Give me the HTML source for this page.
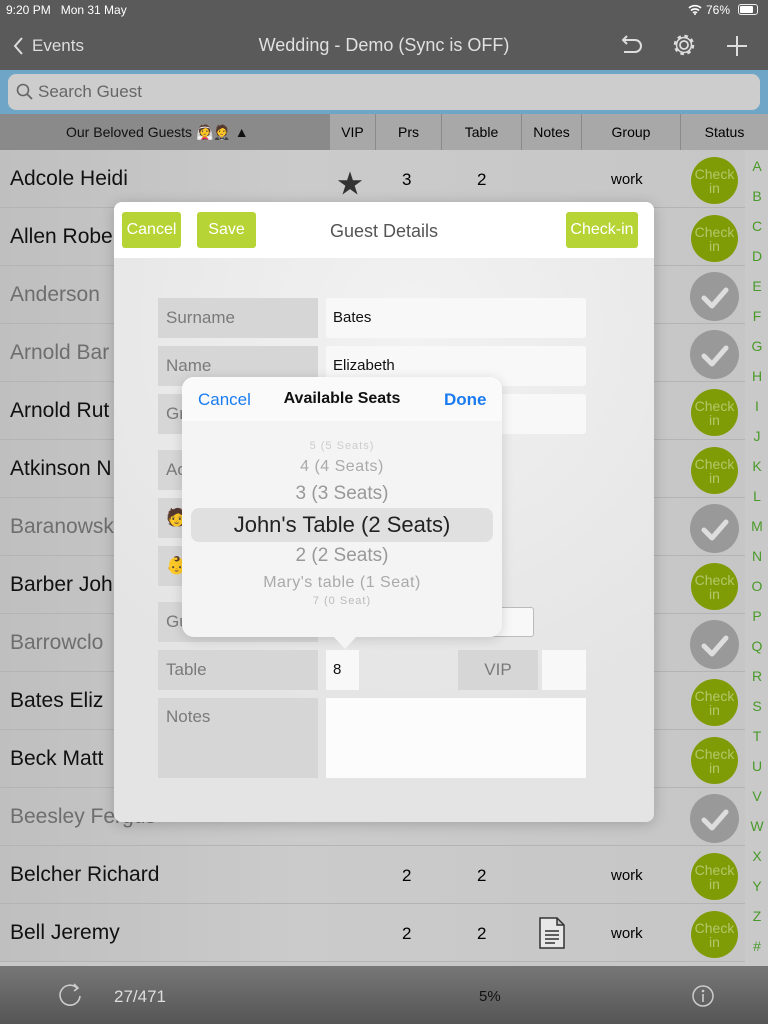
<!DOCTYPE html>
<html><head><meta charset="utf-8"><style>
*{margin:0;padding:0;box-sizing:border-box}
body{width:768px;height:1024px;position:relative;overflow:hidden;font-family:"Liberation Sans","Noto Sans CJK JP",sans-serif;background:#c8c8c8}
.a{position:absolute}
.row{position:absolute;left:0;width:745px;height:58px;border-bottom:1px solid #b4b4b4;background:linear-gradient(90deg,#bfbfbf,#cbcbcb 40%,#c6c6c6)}
.nm{position:absolute;left:10px;top:17px;font-size:21px;color:#111}
.g .nm{color:#6e6e6e}
.ci{position:absolute;left:691px;width:47px;height:47px;border-radius:50%;background:#7f9b05;color:#b4c86a;font-size:14px;text-align:center;line-height:14px;padding-top:10px}
.ck{position:absolute;left:690px;width:49px;height:49px;border-radius:50%;background:#999}
.lt{position:absolute;left:750px;width:14px;text-align:center;font-size:14px;color:#4a9a2a}
.lab{position:absolute;left:158px;width:160px;background:#d6d6d6;color:#7a7a7a;font-size:17px;padding-left:8px}
.fld{position:absolute;background:#f8f8f8;border-radius:3px;font-size:15px;color:#111;padding-left:7px}
.gb{position:absolute;top:212px;height:36px;background:#b6d435;color:#fff;border-radius:3px;font-size:16px;text-align:center;line-height:36px}
.pk{position:absolute;left:0;width:320px;text-align:center}
</style></head><body>
<!-- top bars -->
<div class="a" style="left:0;top:0;width:768px;height:70px;background:#5a5a5a"></div>
<div class="a" style="left:6px;top:3px;font-size:12px;color:#fff">9:20 PM&nbsp;&nbsp; Mon 31 May</div>
<div class="a" style="left:706px;top:3px;font-size:12px;color:#fff">76%</div>
<div class="a" style="left:738px;top:4px;width:20px;height:11px;border:1px solid #eee;border-radius:3px"><div style="width:13px;height:7px;margin:1px;background:#fff;border-radius:1px"></div></div>
<svg class="a" style="left:688px;top:4px" width="14" height="11" viewBox="0 0 14 11"><path d="M1 4a9 9 0 0 1 12 0M3 6.5a6 6 0 0 1 8 0M5 8.8a3 3 0 0 1 4 0" stroke="#fff" stroke-width="1.6" fill="none"/><circle cx="7" cy="10" r="1" fill="#fff"/></svg>
<svg class="a" style="left:12px;top:36px" width="12" height="20"><path d="M10 2L3 10l7 8" stroke="#ddd" stroke-width="2" fill="none"/></svg>
<div class="a" style="left:32px;top:36px;font-size:17px;color:#ddd">Events</div>
<div class="a" style="left:0;width:768px;top:35px;text-align:center;font-size:18px;color:#e0e0e0">Wedding - Demo (Sync is OFF)</div>
<svg class="a" style="left:618px;top:33px" width="26" height="24"><path d="M5 7h12a6 6 0 0 1 0 12H6M9 3L5 7l4 4" stroke="#ddd" stroke-width="2" fill="none"/></svg>
<svg class="a" style="left:671px;top:32px" width="26" height="26" viewBox="0 0 26 26"><circle cx="13" cy="13" r="4" stroke="#ddd" stroke-width="1.8" fill="none"/><circle cx="13" cy="13" r="8.5" stroke="#ddd" stroke-width="3.5" stroke-dasharray="3.3 3.4" fill="none"/><circle cx="13" cy="13" r="7.5" stroke="#ddd" stroke-width="1.5" fill="none"/></svg>
<svg class="a" style="left:726px;top:35px" width="22" height="22"><path d="M11 1v20M1 11h20" stroke="#ddd" stroke-width="2"/></svg>
<div class="a" style="left:0;top:70px;width:768px;height:44px;background:#6fa6c8"></div>
<div class="a" style="left:8px;top:74px;width:752px;height:36px;background:#cdcdcd;border-radius:8px"></div>
<svg class="a" style="left:16px;top:83px" width="18" height="18"><circle cx="7" cy="7" r="5.5" stroke="#666" stroke-width="1.6" fill="none"/><path d="M11 11l5 5" stroke="#666" stroke-width="1.8"/></svg>
<div class="a" style="left:38px;top:82px;font-size:17px;color:#666">Search Guest</div>
<div class="a" style="left:0;top:114px;width:768px;height:36px;background:#a8a8a8"></div>
<div class="a" style="left:0;top:114px;width:329px;height:36px;background:#8a8a8a"></div>
<div class="a" style="left:66px;top:124px;font-size:14px;color:#111">Our Beloved Guests 👰🤵 ▲</div>
<div class="a" style="top:114px;left:329px;width:46px;height:36px;border-left:1px solid #8a8a8a;text-align:center;line-height:36px;font-size:14px">VIP</div>
<div class="a" style="top:114px;left:375px;width:66px;height:36px;border-left:1px solid #8a8a8a;text-align:center;line-height:36px;font-size:14px">Prs</div>
<div class="a" style="top:114px;left:441px;width:80px;height:36px;border-left:1px solid #8a8a8a;text-align:center;line-height:36px;font-size:14px">Table</div>
<div class="a" style="top:114px;left:521px;width:60px;height:36px;border-left:1px solid #8a8a8a;text-align:center;line-height:36px;font-size:14px">Notes</div>
<div class="a" style="top:114px;left:581px;width:99px;height:36px;border-left:1px solid #8a8a8a;text-align:center;line-height:36px;font-size:14px">Group</div>
<div class="a" style="top:114px;left:680px;width:88px;height:36px;border-left:1px solid #8a8a8a;text-align:center;line-height:36px;font-size:14px">Status</div>
<div class="a" style="left:745px;top:150px;width:23px;height:816px;background:#c9c9c9"></div>

<!-- rows -->
<div class="row" style="top:150px"><span class="nm">Adcole Heidi</span><span class="a" style="left:337px;top:14px;font-size:26px;color:#333">★</span><span class="a" style="left:402px;top:20px;font-size:17px">3</span><span class="a" style="left:477px;top:20px;font-size:17px">2</span><span class="a" style="left:611px;top:21px;font-size:15px">work</span></div>
<div class="row" style="top:208px"><span class="nm">Allen Robe</span></div>
<div class="row g" style="top:266px"><span class="nm">Anderson</span></div>
<div class="row g" style="top:324px"><span class="nm">Arnold Bar</span></div>
<div class="row" style="top:382px"><span class="nm">Arnold Rut</span></div>
<div class="row" style="top:440px"><span class="nm">Atkinson N</span></div>
<div class="row g" style="top:498px"><span class="nm">Baranowsk</span></div>
<div class="row" style="top:556px"><span class="nm">Barber Joh</span></div>
<div class="row g" style="top:614px"><span class="nm">Barrowclo</span></div>
<div class="row" style="top:672px"><span class="nm">Bates Eliz</span></div>
<div class="row" style="top:730px"><span class="nm">Beck Matt</span></div>
<div class="row g" style="top:788px"><span class="nm">Beesley Fergus</span></div>
<div class="row" style="top:846px"><span class="nm">Belcher Richard</span><span class="a" style="left:402px;top:20px;font-size:17px">2</span><span class="a" style="left:477px;top:20px;font-size:17px">2</span><span class="a" style="left:611px;top:21px;font-size:15px">work</span></div>
<div class="row" style="top:904px"><span class="nm">Bell Jeremy</span><span class="a" style="left:402px;top:20px;font-size:17px">2</span><span class="a" style="left:477px;top:20px;font-size:17px">2</span><span class="a" style="left:611px;top:21px;font-size:15px">work</span>
<svg class="a" style="left:538px;top:12px" width="28" height="34"><path d="M2 2h17l7 7v23H2z M19 2v7h7" stroke="#333" stroke-width="1.5" fill="#e8e8e8"/><path d="M7 15h14M7 19h14M7 23h14M7 27h10" stroke="#333" stroke-width="1.4"/></svg></div>

<div class="ci" style="top:157px">Check<br>in</div>
<div class="ci" style="top:215px">Check<br>in</div>
<div class="ck" style="top:272px"></div>
<div class="ck" style="top:330px"></div>
<div class="ci" style="top:389px">Check<br>in</div>
<div class="ci" style="top:447px">Check<br>in</div>
<div class="ck" style="top:504px"></div>
<div class="ci" style="top:563px">Check<br>in</div>
<div class="ck" style="top:620px"></div>
<div class="ci" style="top:679px">Check<br>in</div>
<div class="ci" style="top:737px">Check<br>in</div>
<div class="ck" style="top:794px"></div>
<div class="ci" style="top:853px">Check<br>in</div>
<div class="ci" style="top:911px">Check<br>in</div>
<svg class="a" style="left:690px;top:150px" width="50" height="720">
<g stroke="#ddd" stroke-width="5" fill="none" stroke-linecap="round" stroke-linejoin="round">
<path d="M14 148l8 8 14-16"/><path d="M14 206l8 8 14-16"/><path d="M14 380l8 8 14-16"/><path d="M14 496l8 8 14-16"/><path d="M14 670l8 8 14-16"/></g></svg>

<div class="lt" style="top:158px">A</div><div class="lt" style="top:188px">B</div><div class="lt" style="top:218px">C</div><div class="lt" style="top:248px">D</div><div class="lt" style="top:278px">E</div><div class="lt" style="top:308px">F</div><div class="lt" style="top:338px">G</div><div class="lt" style="top:368px">H</div><div class="lt" style="top:398px">I</div><div class="lt" style="top:428px">J</div><div class="lt" style="top:458px">K</div><div class="lt" style="top:488px">L</div><div class="lt" style="top:518px">M</div><div class="lt" style="top:548px">N</div><div class="lt" style="top:578px">O</div><div class="lt" style="top:608px">P</div><div class="lt" style="top:638px">Q</div><div class="lt" style="top:668px">R</div><div class="lt" style="top:698px">S</div><div class="lt" style="top:728px">T</div><div class="lt" style="top:758px">U</div><div class="lt" style="top:788px">V</div><div class="lt" style="top:818px">W</div><div class="lt" style="top:848px">X</div><div class="lt" style="top:878px">Y</div><div class="lt" style="top:908px">Z</div><div class="lt" style="top:938px">#</div>

<!-- bottom bar -->
<div class="a" style="left:0;top:966px;width:768px;height:58px;background:linear-gradient(#777,#555)"></div>
<svg class="a" style="left:58px;top:983px" width="26" height="26"><path d="M19 5a10 10 0 1 0 3 8" stroke="#ccc" stroke-width="1.6" fill="none"/><path d="M16 1l4 4-4 3" stroke="#ccc" stroke-width="1.6" fill="none"/></svg>
<div class="a" style="left:114px;top:987px;font-size:17px;color:#ddd">27/471</div>
<div class="a" style="left:479px;top:988px;font-size:15px;color:#111">5%</div>
<svg class="a" style="left:691px;top:984px" width="24" height="24"><circle cx="12" cy="12" r="10" stroke="#ccc" stroke-width="1.5" fill="none"/><circle cx="12" cy="7" r="1.3" fill="#ccc"/><path d="M12 10v8" stroke="#ccc" stroke-width="1.6"/></svg>

<!-- modal -->
<div class="a" style="left:114px;top:202px;width:540px;height:620px;border-radius:8px;background:radial-gradient(circle at 55% 20%,#f2f2f2,#e4e4e4 70%);overflow:hidden;box-shadow:0 2px 14px rgba(0,0,0,.2)">
<div class="a" style="left:0;top:0;width:540px;height:56px;background:#fff"></div>
<div class="a" style="left:0;width:540px;top:19px;text-align:center;font-size:18px;color:#555">Guest Details</div>
</div>
<div class="gb" style="left:122px;width:59px">Cancel</div>
<div class="gb" style="left:197px;width:59px">Save</div>
<div class="gb" style="left:566px;width:72px">Check-in</div>
<div class="lab" style="top:298px;height:40px;line-height:40px">Surname</div>
<div class="fld" style="left:326px;top:298px;width:260px;height:40px;line-height:40px">Bates</div>
<div class="lab" style="top:346px;height:40px;line-height:40px">Name</div>
<div class="fld" style="left:326px;top:346px;width:260px;height:40px;line-height:40px">Elizabeth</div>
<div class="lab" style="top:394px;height:40px;line-height:40px">Gr</div>
<div class="fld" style="left:326px;top:394px;width:260px;height:40px"></div>
<div class="lab" style="top:450px;height:40px;line-height:40px">Ac</div>
<div class="lab" style="top:498px;height:40px;line-height:40px">🧑</div>
<div class="lab" style="top:546px;height:40px;line-height:40px">👶</div>
<div class="lab" style="top:602px;height:40px;line-height:40px">Gu</div>
<div class="fld" style="left:458px;top:607px;width:76px;height:30px;line-height:30px;border:1px solid #bbb">---</div>
<div class="lab" style="top:650px;height:40px;line-height:40px">Table</div>
<div class="fld" style="left:326px;top:650px;width:33px;height:40px;line-height:40px;border-radius:0">8</div>
<div class="lab" style="left:458px;width:80px;top:650px;height:40px;line-height:40px;text-align:center;padding:0">VIP</div>
<div class="fld" style="left:542px;top:650px;width:44px;height:40px;border-radius:0"></div>
<div class="lab" style="top:698px;height:80px;padding-top:9px">Notes</div>
<div class="fld" style="left:326px;top:698px;width:260px;height:80px;background:#fcfcfc;border-radius:0"></div>

<!-- popover -->
<div class="a" style="left:182px;top:377px;width:320px;height:260px;background:#f4f4f4;border-radius:12px;box-shadow:0 2px 12px rgba(0,0,0,.15);overflow:hidden">
<div class="a" style="left:0;top:0;width:320px;height:44px;background:#fafafa"></div>
<div class="a" style="left:16px;top:13px;font-size:17px;color:#1a7cf0">Cancel</div>
<div class="a" style="left:0;width:320px;top:13px;text-align:center;font-size:16px;font-weight:bold;color:#111">Available Seats</div>
<div class="a" style="left:262px;top:13px;font-size:17px;font-weight:bold;color:#1a7cf0">Done</div>
<div class="a" style="left:9px;top:131px;width:302px;height:34px;background:#e0e0e0;border-radius:8px"></div>
<div class="pk" style="top:63px;font-size:11px;color:#ccc;letter-spacing:1px">5 (5 Seats)</div>
<div class="pk" style="top:81px;font-size:16px;color:#aaa;letter-spacing:.5px">4 (4 Seats)</div>
<div class="pk" style="top:106px;font-size:19px;color:#999">3 (3 Seats)</div>
<div class="pk" style="top:135px;font-size:22px;color:#222">John's Table (2 Seats)</div>
<div class="pk" style="top:168px;font-size:19px;color:#999">2 (2 Seats)</div>
<div class="pk" style="top:197px;font-size:16px;color:#aaa;letter-spacing:.5px">Mary's table (1 Seat)</div>
<div class="pk" style="top:218px;font-size:11px;color:#bbb;letter-spacing:1px">7 (0 Seat)</div>
</div>
<div class="a" style="left:333px;top:636px;width:0;height:0;border-left:12px solid transparent;border-right:12px solid transparent;border-top:13px solid #f4f4f4"></div>
</body></html>
